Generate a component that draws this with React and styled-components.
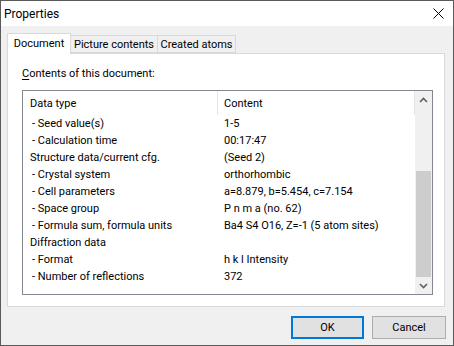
import styled, { createGlobalStyle } from "styled-components";

const GlobalStyle = createGlobalStyle`
  body {
    margin: 0;
    background: #1e2a2a;
    font-family: Roboto, "Liberation Sans", Arial, sans-serif;
    font-size: 11px;
  }
`;

const Window = styled.div`
  width: 454px;
  height: 346px;
  box-sizing: border-box;
  border: 1px solid #5a5a5a;
  background: #f0f0f0;
  display: flex;
  flex-direction: column;
  color: #000;
`;

const TitleBar = styled.div`
  height: 25px;
  background: #fff;
  display: flex;
  align-items: center;
  justify-content: space-between;
  padding: 0 9px 0 3px;
  font-size: 12px;
`;

const Body = styled.div`
  flex: 1;
  padding: 7px 8px 0 6px;
  display: flex;
  flex-direction: column;
`;

const TabStrip = styled.div`
  display: flex;
  align-items: flex-end;
  height: 20px;
  position: relative;
  z-index: 1;
`;

const Tab = styled.div`
  height: ${(p) => (p.$active ? "21px" : "18px")};
  margin-bottom: ${(p) => (p.$active ? "-1px" : "0")};
  box-sizing: border-box;
  border: 1px solid #d9d9d9;
  border-bottom: ${(p) => (p.$active ? "none" : "1px solid #d9d9d9")};
  border-left: ${(p) => (p.$first ? "1px solid #d9d9d9" : "none")};
  background: ${(p) => (p.$active ? "#fff" : "#f0f0f0")};
  display: flex;
  align-items: center;
  padding-bottom: ${(p) => (p.$active ? "2px" : "0")};
  width: ${(p) => p.$w}px;
  justify-content: center;
  white-space: nowrap;
`;

const TabPage = styled.div`
  height: 254px;
  box-sizing: border-box;
  border: 1px solid #d9d9d9;
  background: #fff;
  padding: 12px 11px 0 14px;
  display: flex;
  flex-direction: column;
`;

const Label = styled.div`
  height: 15px;
  line-height: 15px;
  margin-bottom: 9px;
  & u {
    text-decoration-thickness: 1px;
    text-underline-offset: 2px;
  }
`;

const ListBox = styled.div`
  height: 205px;
  box-sizing: border-box;
  border: 1px solid #828790;
  display: flex;
`;

const ListArea = styled.div`
  flex: 1;
  display: flex;
  flex-direction: column;
`;

const Row = styled.div`
  display: grid;
  grid-template-columns: 195px 1fr;
  height: ${(p) => (p.$header ? "24px" : "17px")};
  align-items: center;
`;

const Cell = styled.div`
  padding-left: ${(p) => (p.$second ? "6px" : p.$sub ? "9px" : "7px")};
  white-space: pre;
  height: 100%;
  display: flex;
  align-items: center;
  box-sizing: border-box;
  border-right: ${(p) => (p.$divider ? "1px solid #e5e5e5" : "none")};
`;

const ScrollBar = styled.div`
  width: 17px;
  background: #f0f0f0;
  display: flex;
  flex-direction: column;
`;

const ArrowButton = styled.div`
  height: 17px;
  display: flex;
  align-items: center;
  justify-content: center;
`;

const Track = styled.div`
  flex: 1;
  display: flex;
  flex-direction: column;
  padding-top: 63px;
`;

const Thumb = styled.div`
  flex: 1;
  margin: 0 1px;
  background: #cdcdcd;
`;

const Footer = styled.div`
  display: flex;
  justify-content: flex-end;
  gap: 8px;
  padding: 9px 0 0 0;
  margin-right: -1px;
`;

const Button = styled.button`
  width: ${(p) => (p.$primary ? "73px" : "74px")};
  height: 23px;
  box-sizing: border-box;
  font: inherit;
  color: #000;
  background: #e1e1e1;
  border: ${(p) => (p.$primary ? "2px solid #0078d7" : "1px solid #adadad")};
  padding: 0;
`;

const Chevron = ({ up }) => (
  <svg width="9" height="6" viewBox="0 0 9 6">
    <polyline
      points={up ? "1,5 4.5,1.5 8,5" : "1,1 4.5,4.5 8,1"}
      fill="none"
      stroke="#606060"
      strokeWidth="1.6"
    />
  </svg>
);

const rows = [
  ["- Seed value(s)", "1-5", true],
  ["- Calculation time", "00:17:47", true],
  ["Structure data/current cfg.", "(Seed 2)"],
  ["- Crystal system", "orthorhombic", true],
  ["- Cell parameters", "a=8.879, b=5.454, c=7.154", true],
  ["- Space group", "P n m a (no. 62)", true],
  ["- Formula sum, formula units", "Ba4 S4 O16, Z=-1 (5 atom sites)", true],
  ["Diffraction data", ""],
  ["- Format", "h k l Intensity", true],
  ["- Number of reflections", "372", true],
];

export default function App() {
  return (
    <>
      <GlobalStyle />
      <Window>
        <TitleBar>
          <span>Properties</span>
          <svg width="11" height="11" viewBox="0 0 11 11">
            <path d="M0.5 0.5 L10.5 10.5 M10.5 0.5 L0.5 10.5" stroke="#000" strokeWidth="1" />
          </svg>
        </TitleBar>
        <Body>
          <TabStrip>
            <Tab $active $first $w={64}>Document</Tab>
            <Tab $w={87}>Picture contents</Tab>
            <Tab $w={78}>Created atoms</Tab>
          </TabStrip>
          <TabPage>
            <Label>
              <u>C</u>ontents of this document:
            </Label>
            <ListBox>
              <ListArea>
                <Row $header>
                  <Cell $divider>Data type</Cell>
                  <Cell $second $divider>Content</Cell>
                </Row>
                {rows.map(([k, v, sub]) => (
                  <Row key={k}>
                    <Cell $sub={sub}>{k}</Cell>
                    <Cell $second>{v}</Cell>
                  </Row>
                ))}
              </ListArea>
              <ScrollBar>
                <ArrowButton>
                  <Chevron up />
                </ArrowButton>
                <Track>
                  <Thumb />
                </Track>
                <ArrowButton>
                  <Chevron />
                </ArrowButton>
              </ScrollBar>
            </ListBox>
          </TabPage>
          <Footer>
            <Button $primary>OK</Button>
            <Button>Cancel</Button>
          </Footer>
        </Body>
      </Window>
    </>
  );
}
